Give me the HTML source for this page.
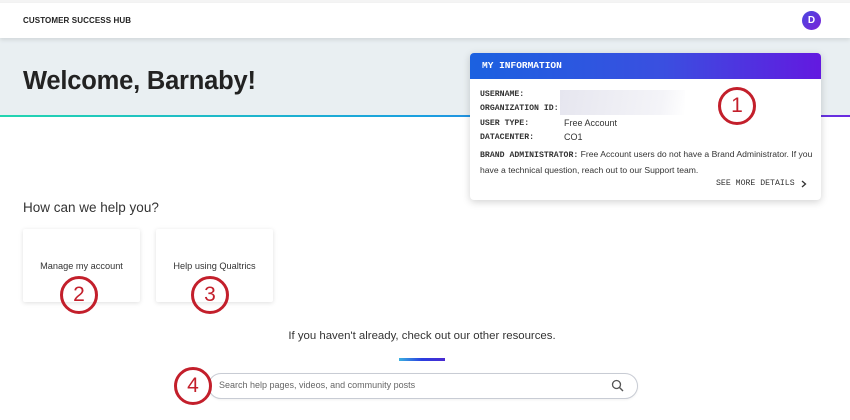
<!DOCTYPE html><html><head><style>
body{margin:0;width:850px;height:420px;position:relative;overflow:hidden;background:#fff;font-family:"Liberation Sans",sans-serif;color:#222}
.a{position:absolute}
.mono{font-family:"Liberation Mono",monospace;font-weight:bold;font-size:8.2px;letter-spacing:0;color:#333;white-space:nowrap}
.circ{position:absolute;width:32px;height:32px;border:3px solid #c31f2b;border-radius:50%;color:#c31f2b;font-size:21px;text-align:center;line-height:32px;background:transparent}
.tile{position:absolute;top:229px;width:117px;height:73px;background:#fff;box-shadow:0 1px 5px rgba(0,0,0,.13);border-radius:2px;font-size:9.2px;text-align:center;line-height:74px;color:#333}
</style></head><body>
<div class="a" style="left:0;top:0;width:850px;height:3px;background:#f4f4f4"></div>
<div class="a" style="left:0;top:38px;width:850px;height:77px;background:#e9eff2"></div>
<div class="a" style="left:0;top:3px;width:850px;height:35px;background:#fff;box-shadow:0 2px 4px rgba(0,0,0,.1)"></div>
<div class="a" style="left:23px;top:16px;font-size:8px;font-weight:bold;letter-spacing:.1px">CUSTOMER SUCCESS HUB</div>
<div class="a" style="left:802px;top:11px;width:19px;height:19px;border-radius:50%;background:linear-gradient(135deg,#4a47e0,#7a22d8);color:#fff;font-size:10px;font-weight:bold;text-align:center;line-height:19px">D</div>
<div class="a" style="left:23px;top:67px;font-size:25.5px;font-weight:bold;color:#222;letter-spacing:-.2px">Welcome, Barnaby!</div>
<div class="a" style="left:0;top:115px;width:850px;height:2px;background:linear-gradient(90deg,#22d5b0,#1a9fe0 50%,#6a2ae0)"></div>
<div class="a" style="left:470px;top:53px;width:351px;height:147px;background:#fff;border-radius:4px;box-shadow:0 2px 8px rgba(0,0,0,.18);overflow:hidden">
<div style="height:26px;background:linear-gradient(90deg,#1b61e0,#3a4fe0 55%,#6319e0);line-height:26px;padding-left:12px" class="mono"><span style="color:#fff;font-size:9.5px">MY INFORMATION</span></div>
<div class="a mono" style="left:10px;top:37px">USERNAME:</div>
<div class="a mono" style="left:10px;top:51px">ORGANIZATION ID:</div>
<div class="a mono" style="left:10px;top:66px">USER TYPE:</div>
<div class="a mono" style="left:10px;top:80px">DATACENTER:</div>
<div class="a" style="left:90px;top:37px;width:125px;height:25px;background:linear-gradient(100deg,#e6e6ef,#f4f4f8 80%,#fff)"></div>
<div class="a" style="left:94px;top:65px;font-size:9px;color:#333">Free Account</div>
<div class="a" style="left:94px;top:79px;font-size:9px;color:#333">CO1</div>
<div class="a" style="left:10px;top:94px;width:340px;font-size:8.6px;line-height:15px;color:#333;white-space:nowrap"><span class="mono">BRAND ADMINISTRATOR:</span> Free Account users do not have a Brand Administrator. If you<br>have a technical question, reach out to our Support team.</div>
<div class="a mono" style="left:246px;top:126px;font-weight:normal;font-size:8.2px">SEE MORE DETAILS</div>
<svg class="a" style="left:331px;top:127px" width="6" height="8" viewBox="0 0 6 8"><path d="M1 1L4.5 4L1 7" fill="none" stroke="#333" stroke-width="1.3"/></svg>
</div>
<div class="circ" style="left:718px;top:87px">1</div>
<div class="a" style="left:23px;top:200px;font-size:13.5px;color:#333">How can we help you?</div>
<div class="tile" style="left:23px">Manage my account</div>
<div class="tile" style="left:156px">Help using Qualtrics</div>
<div class="circ" style="left:60px;top:276px">2</div>
<div class="circ" style="left:191px;top:276px">3</div>
<div class="a" style="left:0;top:330px;width:844px;text-align:center;font-size:11.4px;color:#333">If you haven't already, check out our other resources.</div>
<div class="a" style="left:399px;top:358px;width:46px;height:3px;background:linear-gradient(90deg,#3ab0e0,#2a3ee0 50%,#4a2ad0)"></div>
<div class="a" style="left:208px;top:373px;width:428px;height:24px;border:1px solid #c8ccd4;border-radius:13px;background:#fff;box-shadow:0 1px 2px rgba(0,0,0,.06)"></div>
<div class="a" style="left:219px;top:380px;font-size:9px;color:#666">Search help pages, videos, and community posts</div>
<svg class="a" style="left:611px;top:379px" width="13" height="13" viewBox="0 0 13 13"><circle cx="5.5" cy="5.5" r="4" fill="none" stroke="#555" stroke-width="1.3"/><path d="M8.5 8.5L12 12" stroke="#555" stroke-width="1.4"/></svg>
<div class="circ" style="left:174px;top:367px;background:#fff">4</div>
</body></html>
